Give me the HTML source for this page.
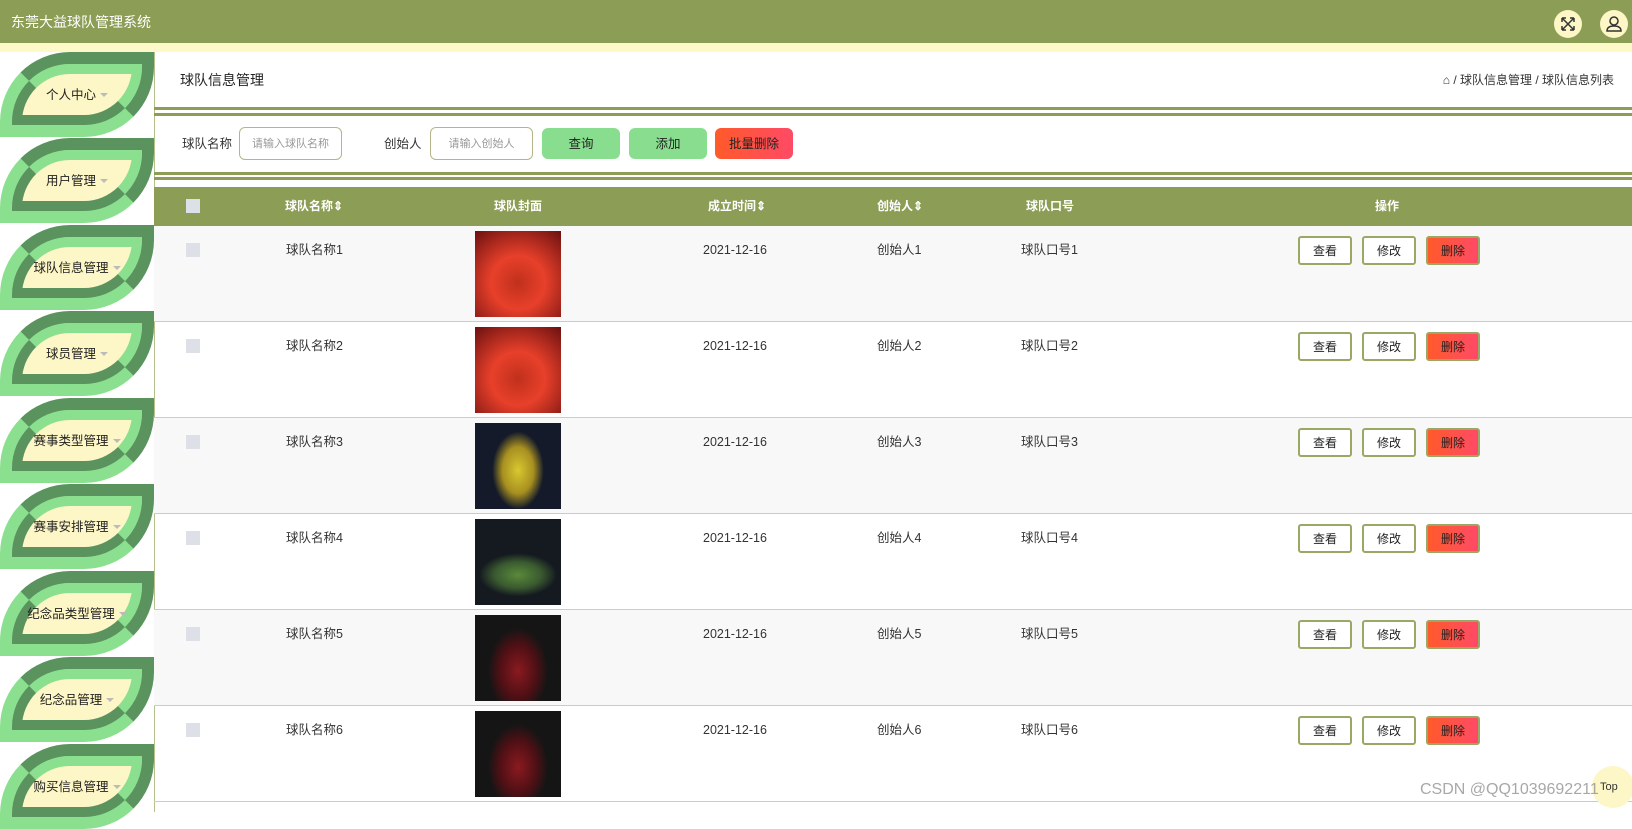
<!DOCTYPE html>
<html><head><meta charset="utf-8"><style>
*{margin:0;padding:0;box-sizing:border-box}
body{width:1632px;height:812px;overflow:hidden;background:#fff;font-family:"Liberation Sans","Noto Sans CJK SC",sans-serif;font-size:12.5px;line-height:16px;color:#333;position:relative}
.abs{position:absolute}
.hdr{left:0;top:0;width:1632px;height:43px;background:#8c9d55}
.band{left:0;top:43px;width:1632px;height:9px;background:#fdf9c8}
.circ{width:28px;height:28px;border-radius:50%;background:#fdf6c6;top:10px}
.leaf{left:0;width:154px;height:85px;border-radius:70px 0 70px 0;border:12px solid;border-color:#5a935e #5a935e #8be08f #8be08f;background:#8be08f}
.leaf .in{position:absolute;left:0;top:0;right:0;bottom:0;border-radius:58px 0 58px 0;border:10px solid;border-color:#8be08f #8be08f #5a935e #5a935e;background:#fdf6c6;display:flex;align-items:center;justify-content:center;font-size:12.5px;color:#222}
.caret{display:inline-block;width:0;height:0;border:4px solid transparent;border-top:4px solid #bbb;margin-left:4px;margin-top:4px}
.line{left:154px;width:1478px;height:3px;background:#8c9d55}
.inp{border:1px solid #b5b58a;border-radius:6px;height:33px;top:127px;font-size:11px;color:#999;display:flex;align-items:center;justify-content:center}
.btn{top:128px;height:31px;width:78px;border-radius:6px;background:#88de8e;display:flex;align-items:center;justify-content:center;color:#222}
.th{top:187px;left:154px;width:1478px;height:39px;background:#8c9d55}
.tht{top:187px;height:39px;line-height:39px;color:#fff;font-weight:bold;font-size:12px;transform:translateX(-50%)}
.row{left:154px;width:1478px;height:96px;border-bottom:1px solid #c9d3a7}
.cb{width:14px;height:14px;background:#dde0e6}
.ab{height:29px;width:54px;border:2px solid #9aa866;border-radius:3px;display:flex;align-items:center;justify-content:center;font-size:12px;background:#fff;color:#222}
.del{background:linear-gradient(90deg,#ff5a2a,#ff4a66)}
.img{width:86px;height:86px;left:475px}
</style></head><body>
<div class="abs hdr"></div>
<div class="abs" style="left:11px;top:14px;color:#fff;font-size:14px">东莞大益球队管理系统</div>
<div class="abs band"></div>
<div class="abs circ" style="left:1554px"><svg width="28" height="28" viewBox="0 0 28 28" fill="none" stroke="#333" stroke-width="1.5"><path d="M8 8l12 12M20 8L8 20M8 8h4M8 8v4M20 8h-4M20 8v4M8 20h4M8 20v-4M20 20h-4M20 20v-4"/></svg></div>
<div class="abs circ" style="left:1600px"><svg width="28" height="28" viewBox="0 0 28 28" fill="none" stroke="#333" stroke-width="1.5"><circle cx="14" cy="11" r="4"/><path d="M7 21c0-4 3-5 7-5s7 1 7 5z"/></svg></div>

<div class="abs leaf" style="top:52px"><div class="in">个人中心<span class="caret"></span></div></div>
<div class="abs leaf" style="top:138px"><div class="in">用户管理<span class="caret"></span></div></div>
<div class="abs leaf" style="top:225px"><div class="in">球队信息管理<span class="caret"></span></div></div>
<div class="abs leaf" style="top:311px"><div class="in">球员管理<span class="caret"></span></div></div>
<div class="abs leaf" style="top:398px"><div class="in">赛事类型管理<span class="caret"></span></div></div>
<div class="abs leaf" style="top:484px"><div class="in">赛事安排管理<span class="caret"></span></div></div>
<div class="abs leaf" style="top:571px"><div class="in">纪念品类型管理<span class="caret"></span></div></div>
<div class="abs leaf" style="top:657px"><div class="in">纪念品管理<span class="caret"></span></div></div>
<div class="abs leaf" style="top:744px"><div class="in">购买信息管理<span class="caret"></span></div></div>
<div class="abs" style="left:154px;top:52px;width:1px;height:760px;background:#b5c08a"></div>

<div class="abs" style="left:180px;top:72px;font-size:14px;color:#222">球队信息管理</div>
<div class="abs" style="right:18px;top:72px;font-size:12px;color:#333">⌂ / 球队信息管理 / 球队信息列表</div>
<div class="abs line" style="top:107px"></div><div class="abs line" style="top:113px"></div>

<div class="abs" style="left:182px;top:136px">球队名称</div>
<div class="abs inp" style="left:239px;width:103px">请输入球队名称</div>
<div class="abs" style="left:384px;top:136px">创始人</div>
<div class="abs inp" style="left:430px;width:103px">请输入创始人</div>
<div class="abs btn" style="left:542px">查询</div>
<div class="abs btn" style="left:629px">添加</div>
<div class="abs btn" style="left:715px;background:linear-gradient(90deg,#ff5a2a,#ff4a66)">批量删除</div>
<div class="abs line" style="top:172px"></div><div class="abs line" style="top:177px"></div>

<div class="abs th"></div>
<div class="abs cb" style="left:186px;top:199px"></div>
<div class="abs tht" style="left:314px">球队名称⇕</div>
<div class="abs tht" style="left:518px">球队封面</div>
<div class="abs tht" style="left:737px">成立时间⇕</div>
<div class="abs tht" style="left:900px">创始人⇕</div>
<div class="abs tht" style="left:1050px">球队口号</div>
<div class="abs tht" style="left:1387px">操作</div>

<div class="abs row" style="top:226px;background:#f8f8f8"></div>
<div class="abs row" style="top:322px"></div>
<div class="abs row" style="top:418px;background:#f8f8f8"></div>
<div class="abs row" style="top:514px"></div>
<div class="abs row" style="top:610px;background:#f8f8f8"></div>
<div class="abs row" style="top:706px"></div>

<div class="abs cb" style="left:186px;top:243px"></div><div class="abs" style="left:286px;top:242px">球队名称1</div><div class="abs img" style="top:231px;background:radial-gradient(circle at 50% 60%,#c0301c,#e8402a 40%,#6a1010 100%)"></div><div class="abs" style="left:703px;top:242px">2021-12-16</div><div class="abs" style="left:877px;top:242px">创始人1</div><div class="abs" style="left:1021px;top:242px">球队口号1</div>
<div class="abs ab" style="left:1298px;top:236px">查看</div><div class="abs ab" style="left:1362px;top:236px">修改</div><div class="abs ab del" style="left:1426px;top:236px">删除</div>

<div class="abs cb" style="left:186px;top:339px"></div><div class="abs" style="left:286px;top:338px">球队名称2</div><div class="abs img" style="top:327px;background:radial-gradient(circle at 50% 60%,#c0301c,#e8402a 40%,#6a1010 100%)"></div><div class="abs" style="left:703px;top:338px">2021-12-16</div><div class="abs" style="left:877px;top:338px">创始人2</div><div class="abs" style="left:1021px;top:338px">球队口号2</div>
<div class="abs ab" style="left:1298px;top:332px">查看</div><div class="abs ab" style="left:1362px;top:332px">修改</div><div class="abs ab del" style="left:1426px;top:332px">删除</div>

<div class="abs cb" style="left:186px;top:435px"></div><div class="abs" style="left:286px;top:434px">球队名称3</div><div class="abs img" style="top:423px;background:radial-gradient(ellipse 30% 45% at 50% 55%,#d8c830,#a89020 60%,#141a2a 100%)"></div><div class="abs" style="left:703px;top:434px">2021-12-16</div><div class="abs" style="left:877px;top:434px">创始人3</div><div class="abs" style="left:1021px;top:434px">球队口号3</div>
<div class="abs ab" style="left:1298px;top:428px">查看</div><div class="abs ab" style="left:1362px;top:428px">修改</div><div class="abs ab del" style="left:1426px;top:428px">删除</div>

<div class="abs cb" style="left:186px;top:531px"></div><div class="abs" style="left:286px;top:530px">球队名称4</div><div class="abs img" style="top:519px;background:radial-gradient(ellipse 45% 25% at 50% 65%,#5a8a3a,#3a5a30 60%,#151a20 100%)"></div><div class="abs" style="left:703px;top:530px">2021-12-16</div><div class="abs" style="left:877px;top:530px">创始人4</div><div class="abs" style="left:1021px;top:530px">球队口号4</div>
<div class="abs ab" style="left:1298px;top:524px">查看</div><div class="abs ab" style="left:1362px;top:524px">修改</div><div class="abs ab del" style="left:1426px;top:524px">删除</div>

<div class="abs cb" style="left:186px;top:627px"></div><div class="abs" style="left:286px;top:626px">球队名称5</div><div class="abs img" style="top:615px;background:radial-gradient(ellipse 35% 50% at 50% 65%,#8a1a20,#501015 60%,#151515 100%)"></div><div class="abs" style="left:703px;top:626px">2021-12-16</div><div class="abs" style="left:877px;top:626px">创始人5</div><div class="abs" style="left:1021px;top:626px">球队口号5</div>
<div class="abs ab" style="left:1298px;top:620px">查看</div><div class="abs ab" style="left:1362px;top:620px">修改</div><div class="abs ab del" style="left:1426px;top:620px">删除</div>

<div class="abs cb" style="left:186px;top:723px"></div><div class="abs" style="left:286px;top:722px">球队名称6</div><div class="abs img" style="top:711px;background:radial-gradient(ellipse 35% 50% at 50% 65%,#8a1a20,#501015 60%,#151515 100%)"></div><div class="abs" style="left:703px;top:722px">2021-12-16</div><div class="abs" style="left:877px;top:722px">创始人6</div><div class="abs" style="left:1021px;top:722px">球队口号6</div>
<div class="abs ab" style="left:1298px;top:716px">查看</div><div class="abs ab" style="left:1362px;top:716px">修改</div><div class="abs ab del" style="left:1426px;top:716px">删除</div>

<div class="abs" style="left:1592px;top:766px;width:42px;height:42px;border-radius:50%;background:#fdf6c6;font-size:11px;line-height:42px;text-indent:8px;color:#333">Top</div>
<div class="abs" style="left:1420px;top:782px;font-size:16px;color:#999;opacity:.85">CSDN @QQ1039692211</div>
</body></html>
